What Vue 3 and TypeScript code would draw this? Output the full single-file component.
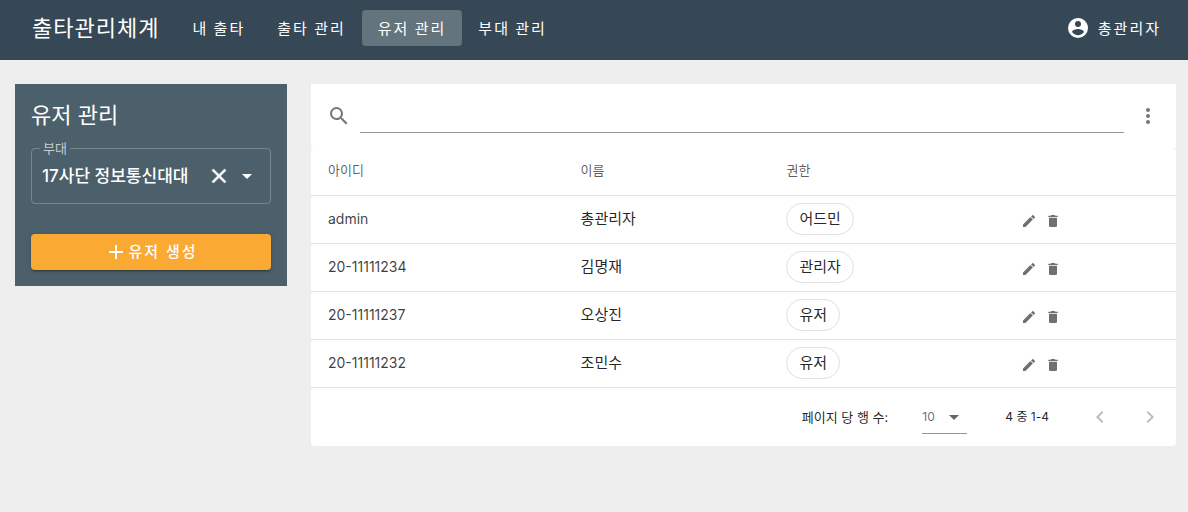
<script setup lang="ts">
import { ref, computed } from 'vue'

interface User {
  id: string
  name: string
  role: string
}

const icons = {
  account:
    'M12,19.2C9.5,19.2 7.29,17.92 6,16C6.03,14 10,12.9 12,12.9C14,12.9 17.97,14 18,16C16.71,17.92 14.5,19.2 12,19.2M12,5A3,3 0 0,1 15,8A3,3 0 0,1 12,11A3,3 0 0,1 9,8A3,3 0 0,1 12,5M12,2A10,10 0 0,0 2,12A10,10 0 0,0 12,22A10,10 0 0,0 22,12C22,6.47 17.5,2 12,2Z',
  close:
    'M19,6.41L17.59,5L12,10.59L6.41,5L5,6.41L10.59,12L5,17.59L6.41,19L12,13.41L17.59,19L19,17.59L13.41,12L19,6.41Z',
  caret: 'M7,10L12,15L17,10H7Z',
  plus: 'M19,13H13V19H11V13H5V11H11V5H13V11H19V13Z',
  search:
    'M9.5,3A6.5,6.5 0 0,1 16,9.5C16,11.11 15.41,12.59 14.44,13.73L14.71,14H15.5L20.5,19L19,20.5L14,15.5V14.71L13.73,14.44C12.59,15.41 11.11,16 9.5,16A6.5,6.5 0 0,1 3,9.5A6.5,6.5 0 0,1 9.5,3M9.5,5C7,5 5,7 5,9.5C5,12 7,14 9.5,14C12,14 14,12 14,9.5C14,7 12,5 9.5,5Z',
  dots:
    'M12,16A2,2 0 0,1 14,18A2,2 0 0,1 12,20A2,2 0 0,1 10,18A2,2 0 0,1 12,16M12,10A2,2 0 0,1 14,12A2,2 0 0,1 12,14A2,2 0 0,1 10,12A2,2 0 0,1 12,10M12,4A2,2 0 0,1 14,6A2,2 0 0,1 12,8A2,2 0 0,1 10,6A2,2 0 0,1 12,4Z',
  pencil:
    'M20.71,7.04C21.1,6.65 21.1,6 20.71,5.63L18.37,3.29C18,2.9 17.35,2.9 16.96,3.29L15.12,5.12L18.87,8.87M3,17.25V21H6.75L17.81,9.93L14.06,6.18L3,17.25Z',
  trash: 'M19,4H15.5L14.5,3H9.5L8.5,4H5V6H19M6,19A2,2 0 0,0 8,21H16A2,2 0 0,0 18,19V7H6V19Z',
  left: 'M15.41,16.58L10.83,12L15.41,7.41L14,6L8,12L14,18L15.41,16.58Z',
  right: 'M8.59,16.58L13.17,12L8.59,7.41L10,6L16,12L10,18L8.59,16.58Z',
}

const menus = ['내 출타', '출타 관리', '유저 관리', '부대 관리']
const activeMenu = ref('유저 관리')
const unit = ref('17사단 정보통신대대')
const query = ref('')
const perPage = ref('10')

const users = ref<User[]>([
  { id: 'admin', name: '총관리자', role: '어드민' },
  { id: '20-11111234', name: '김명재', role: '관리자' },
  { id: '20-11111237', name: '오상진', role: '유저' },
  { id: '20-11111232', name: '조민수', role: '유저' },
])

const shown = computed(() =>
  users.value.filter((u) => (u.id + u.name).includes(query.value.trim())),
)
</script>

<template>
  <div class="app">
    <header class="bar">
      <h1 class="brand">출타관리체계</h1>
      <nav class="nav">
        <a
          v-for="m in menus"
          :key="m"
          href="#"
          class="nav-link"
          :class="{ active: m === activeMenu }"
          @click.prevent="activeMenu = m"
          >{{ m }}</a
        >
      </nav>
      <button type="button" class="account">
        <svg class="icon" viewBox="0 0 24 24"><path :d="icons.account" /></svg>
        <span>총관리자</span>
      </button>
    </header>

    <main class="content">
      <aside class="side">
        <h2 class="side-title">유저 관리</h2>
        <fieldset class="field">
          <legend><label for="unit">부대</label></legend>
          <div class="field-row">
            <select id="unit" v-model="unit" class="unit">
              <option>17사단 정보통신대대</option>
            </select>
            <button type="button" class="plain" aria-label="지우기" @click="unit = ''">
              <svg class="icon bold" viewBox="0 0 24 24"><path :d="icons.close" /></svg>
            </button>
            <svg class="icon" viewBox="0 0 24 24"><path :d="icons.caret" /></svg>
          </div>
        </fieldset>
        <button type="button" class="create">
          <svg class="icon" viewBox="0 0 24 24"><path :d="icons.plus" /></svg>
          <span>유저 생성</span>
        </button>
      </aside>

      <section class="panel">
        <div class="search">
          <label for="query" class="search-label" aria-label="검색">
            <svg class="icon" viewBox="0 0 24 24"><path :d="icons.search" /></svg>
          </label>
          <input id="query" v-model="query" type="text" class="query" />
          <button type="button" class="plain" aria-label="메뉴">
            <svg class="icon" viewBox="0 0 24 24"><path :d="icons.dots" /></svg>
          </button>
        </div>
        <div class="data">
          <table class="table">
            <colgroup>
              <col class="c-id" />
              <col class="c-name" />
              <col class="c-role" />
              <col />
            </colgroup>
            <thead>
              <tr>
                <th scope="col">아이디</th>
                <th scope="col">이름</th>
                <th scope="col">권한</th>
                <th></th>
              </tr>
            </thead>
            <tbody>
              <tr v-for="u in shown" :key="u.id">
                <td class="uid">{{ u.id }}</td>
                <td>{{ u.name }}</td>
                <td><span class="chip">{{ u.role }}</span></td>
                <td>
                  <div class="actions">
                    <button type="button" class="plain" aria-label="수정">
                      <svg class="icon small" viewBox="0 0 24 24"><path :d="icons.pencil" /></svg>
                    </button>
                    <button type="button" class="plain" aria-label="삭제">
                      <svg class="icon small" viewBox="0 0 24 24"><path :d="icons.trash" /></svg>
                    </button>
                  </div>
                </td>
              </tr>
            </tbody>
          </table>
          <footer class="pager">
            <label for="per-page">페이지 당 행 수:</label>
            <div class="per-page">
              <select id="per-page" v-model="perPage">
                <option>10</option>
                <option>20</option>
              </select>
              <svg class="icon" viewBox="0 0 24 24"><path :d="icons.caret" /></svg>
            </div>
            <span class="range">4 중 1-4</span>
            <div class="steps">
              <button type="button" class="plain step" aria-label="이전 페이지" disabled>
                <svg class="icon" viewBox="0 0 24 24"><path :d="icons.left" /></svg>
              </button>
              <button type="button" class="plain step" aria-label="다음 페이지" disabled>
                <svg class="icon" viewBox="0 0 24 24"><path :d="icons.right" /></svg>
              </button>
            </div>
          </footer>
        </div>
      </section>
    </main>
  </div>
</template>

<style>
body {
  margin: 0;
  background: #eeeeee;
}
</style>

<style scoped>
.app,
.app * {
  box-sizing: border-box;
}
.app {
  font-family: Inter, 'Noto Sans CJK KR', sans-serif;
  font-size: 15px;
  line-height: 20px;
  color: rgba(0, 0, 0, 0.87);
}
button,
select,
input {
  font: inherit;
  color: inherit;
}
.icon {
  display: block;
  flex: none;
  width: 24px;
  height: 24px;
  fill: currentColor;
}
.icon.small {
  width: 16px;
  height: 16px;
}
.icon.bold {
  stroke: currentColor;
  stroke-width: 0.6;
}
.plain {
  display: flex;
  align-items: center;
  justify-content: center;
  padding: 0;
  border: 0;
  background: none;
  cursor: pointer;
}
.bar {
  display: flex;
  align-items: center;
  padding: 10px 27px 14px 32px;
  background: #364856;
  color: #fff;
  font-family: 'Noto Sans CJK KR', sans-serif;
}
.brand {
  margin: 0 17px 0 0;
  padding-bottom: 4px;
  font-size: 22px;
  line-height: 32px;
  font-weight: 400;
  letter-spacing: 1px;
}
.nav {
  display: flex;
}
.nav-link {
  padding: 8px 16px;
  border-radius: 4px;
  color: #fff;
  letter-spacing: 2px;
  text-decoration: none;
}
.nav-link.active {
  background: #63747d;
}
.account {
  display: flex;
  align-items: center;
  gap: 8px;
  margin-left: auto;
  padding: 0;
  border: 0;
  background: none;
  letter-spacing: 2px;
  cursor: pointer;
}
.content {
  display: grid;
  grid-template-columns: 272px minmax(0, 1fr);
  align-items: start;
  gap: 24px;
  padding: 24px 12px 24px 15px;
}
.side {
  padding: 16px;
  background: #4c606c;
  color: #fff;
}
.side-title {
  margin: 0 0 9px;
  font-size: 22px;
  line-height: 30px;
  padding-bottom: 2px;
  font-weight: 400;
}
.field {
  min-width: 0;
  margin: 0 0 30px;
  padding: 0 11px 15px 8px;
  border: 1px solid rgba(255, 255, 255, 0.24);
  border-radius: 4px;
}
.field legend {
  padding: 0 3px;
  font-size: 13px;
  line-height: 14px;
  color: rgba(255, 255, 255, 0.7);
}
.field-row {
  display: flex;
  align-items: center;
  gap: 4px;
  padding-top: 9px;
}
.unit {
  flex: 1;
  min-width: 0;
  padding: 0 0 0 2px;
  border: 0;
  background: none;
  appearance: none;
  font-size: 17px;
  line-height: 24px;
  font-weight: 500;
}
.unit option {
  color: #222;
}
.create {
  display: flex;
  align-items: center;
  justify-content: center;
  width: 100%;
  height: 36px;
  padding: 0 16px;
  border: 0;
  border-radius: 4px;
  background: #faa933;
  box-shadow:
    0 3px 1px -2px rgba(0, 0, 0, 0.2),
    0 2px 2px 0 rgba(0, 0, 0, 0.14),
    0 1px 5px 0 rgba(0, 0, 0, 0.12);
  font-weight: 500;
  letter-spacing: 2px;
  cursor: pointer;
}
.search {
  display: flex;
  align-items: center;
  gap: 9px;
  height: 64px;
  padding: 0 16px;
  background: #fff;
  color: rgba(0, 0, 0, 0.54);
}
.search .query {
  flex: 1;
  min-width: 0;
  height: 34px;
  margin-right: 3px;
  padding: 0;
  border: 0;
  border-bottom: 1px solid #949494;
  background: none;
  outline: none;
}
.data {
  background: #fff;
  border-radius: 4px;
}
.table {
  width: 100%;
  border-collapse: collapse;
  table-layout: fixed;
}
.c-id {
  width: 29.2%;
}
.c-name {
  width: 23.8%;
}
.c-role {
  width: 27.1%;
}
.table th,
.table td {
  height: 48px;
  padding: 0 17px;
  border-bottom: 1px solid #e0e0e0;
  text-align: left;
}
.table td {
  padding-bottom: 1px;
}
.table tbody tr:last-child td {
  border-bottom: 0;
}
.table th {
  height: 47px;
  padding-bottom: 3px;
  font-size: 13px;
  font-weight: 400;
  color: rgba(0, 0, 0, 0.65);
}
.uid {
  font-size: 14px;
  color: rgba(0, 0, 0, 0.76);
}
.chip {
  display: inline-block;
  padding: 5px 12px;
  border: 1px solid #e0e0e0;
  border-radius: 16px;
  vertical-align: middle;
}
.actions {
  display: flex;
  gap: 8px;
  padding-top: 4px;
  color: rgba(0, 0, 0, 0.56);
}
.pager {
  display: flex;
  align-items: center;
  justify-content: flex-end;
  height: 59px;
  padding: 0 8px;
  border-top: 1px solid #e0e0e0;
  font-size: 13px;
}
.per-page {
  display: flex;
  align-items: center;
  width: 45px;
  height: 34px;
  margin: 0 38px 0 34px;
  border-bottom: 1px solid #949494;
  font-size: 12px;
  color: rgba(0, 0, 0, 0.6);
}
.per-page select {
  width: 20px;
  padding: 0;
  border: 0;
  background: none;
  appearance: none;
}
.range {
  font-size: 12px;
}
.steps {
  display: flex;
  gap: 14px;
  margin-left: 33px;
}
.step {
  width: 36px;
  height: 36px;
  color: rgba(0, 0, 0, 0.26);
}
</style>
